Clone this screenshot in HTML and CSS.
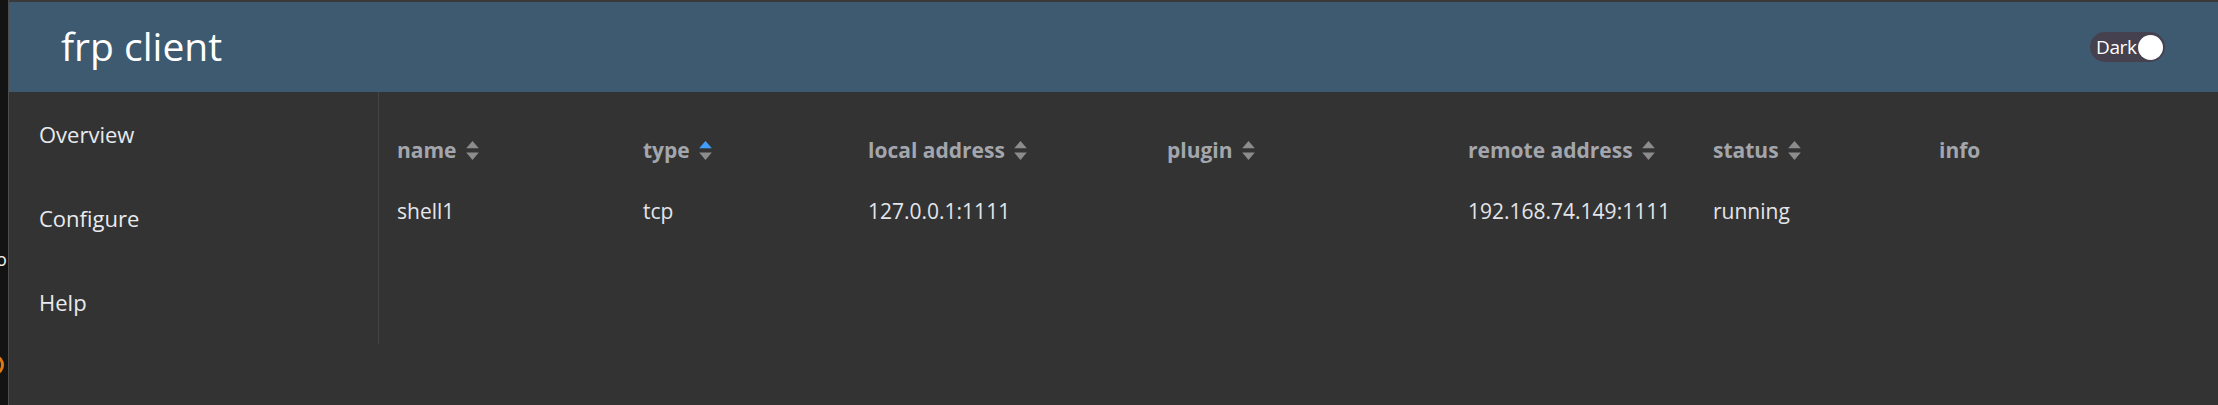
FILE: index.html
```html
<!DOCTYPE html>
<html lang="en">
<head>
<meta charset="utf-8">
<title>frp client</title>
<link rel="stylesheet" href="styles.css">
</head>
<body>
<div class="screen">
  <div class="outside">
    <span class="outside-glyph">o</span>
    <span class="outside-ring"></span>
  </div>
  <div class="app">
    <header class="topbar">
      <h1 class="brand">frp client</h1>
      <div class="switch">
        <span class="switch-text">Dark</span>
        <span class="switch-knob"></span>
      </div>
    </header>
    <div class="body">
      <aside class="aside">
        <ul class="menu">
          <li class="menu-item">Overview</li>
          <li class="menu-item">Configure</li>
          <li class="menu-item">Help</li>
        </ul>
      </aside>
      <main class="main">
        <table class="table">
          <colgroup>
            <col class="c-name"><col class="c-type"><col class="c-local"><col class="c-plugin"><col class="c-remote"><col class="c-status"><col>
          </colgroup>
          <thead>
            <tr>
              <th><span class="th">name<svg class="caret" viewBox="0 0 12 19"><path d="M0 7 L6 0 L12 7 Z" fill="#8c8c8c"/><path d="M0 11 L12 11 L6 18 Z" fill="#8c8c8c"/></svg></span></th>
              <th><span class="th">type<svg class="caret" viewBox="0 0 12 19"><path d="M0 7 L6 0 L12 7 Z" fill="#409eff"/><path d="M0 11 L12 11 L6 18 Z" fill="#8c8c8c"/></svg></span></th>
              <th><span class="th">local address<svg class="caret" viewBox="0 0 12 19"><path d="M0 7 L6 0 L12 7 Z" fill="#8c8c8c"/><path d="M0 11 L12 11 L6 18 Z" fill="#8c8c8c"/></svg></span></th>
              <th><span class="th">plugin<svg class="caret" viewBox="0 0 12 19"><path d="M0 7 L6 0 L12 7 Z" fill="#8c8c8c"/><path d="M0 11 L12 11 L6 18 Z" fill="#8c8c8c"/></svg></span></th>
              <th><span class="th">remote address<svg class="caret" viewBox="0 0 12 19"><path d="M0 7 L6 0 L12 7 Z" fill="#8c8c8c"/><path d="M0 11 L12 11 L6 18 Z" fill="#8c8c8c"/></svg></span></th>
              <th><span class="th">status<svg class="caret" viewBox="0 0 12 19"><path d="M0 7 L6 0 L12 7 Z" fill="#8c8c8c"/><path d="M0 11 L12 11 L6 18 Z" fill="#8c8c8c"/></svg></span></th>
              <th><span class="th">info</span></th>
            </tr>
          </thead>
          <tbody>
            <tr>
              <td>shell1</td>
              <td>tcp</td>
              <td>127.0.0.1:1111</td>
              <td></td>
              <td>192.168.74.149:1111</td>
              <td>running</td>
              <td></td>
            </tr>
          </tbody>
        </table>
      </main>
    </div>
  </div>
</div>
</body>
</html>
```
FILE: styles.css
```css
* { box-sizing: border-box; }
html, body { margin: 0; padding: 0; }
body {
  background: #333333;
  font-family: "Open Sans", "Noto Sans", sans-serif;
  overflow: hidden;
}
.screen {
  display: flex;
  width: 2218px;
  height: 405px;
}
.outside {
  width: 9px;
  flex: none;
  background: #131313;
  border-right: 1px solid #4e4e4e;
  display: flex;
  flex-direction: column;
  overflow: hidden;
}
.outside-glyph {
  color: #f0f0f0;
  font-size: 18px;
  line-height: 18px;
  margin-top: 250px;
  margin-left: -4px;
}
.outside-ring {
  width: 14px;
  height: 18px;
  margin-top: 88px;
  margin-left: -10px;
  border: 3px solid #e07a10;
  border-radius: 50%;
}
.app {
  flex: 1;
  display: flex;
  flex-direction: column;
  border-top: 2px solid #3a3a3a;
  background: #333333;
}
.topbar {
  height: 90px;
  flex: none;
  background: #3d5a71;
  display: flex;
  align-items: center;
  justify-content: space-between;
  padding: 0 53px 0 52px;
}
.brand {
  margin: 0;
  color: #ffffff;
  font-weight: 400;
  font-size: 39px;
  line-height: 1;
  padding-bottom: 4px;
}
.switch {
  display: flex;
  align-items: center;
  height: 30px;
  width: 75px;
  border-radius: 15px;
  background: #46414e;
  padding: 0 2px 0 6px;
  justify-content: space-between;
}
.switch-text {
  color: #ffffff;
  font-size: 19px;
  line-height: 1;
  letter-spacing: -0.4px;
}
.switch-knob {
  width: 25px;
  height: 25px;
  border-radius: 50%;
  background: #ffffff;
}
.body {
  flex: 1;
  display: flex;
}
.aside {
  width: 370px;
  flex: none;
}
.menu {
  list-style: none;
  margin: 0;
  padding: 0;
  border-right: 1px solid #444444;
}
.menu-item {
  height: 84px;
  display: flex;
  align-items: center;
  padding-left: 30px;
  color: #e8eaf0;
  font-size: 22px;
}
.main {
  flex: 1;
  padding: 30px 0 0 8px;
}
.table {
  border-collapse: collapse;
  table-layout: fixed;
  width: 100%;
}
.c-name { width: 246px; }
.c-type { width: 225px; }
.c-local { width: 299px; }
.c-plugin { width: 301px; }
.c-remote { width: 245px; }
.c-status { width: 226px; }
.table th, .table td {
  padding: 0 10px;
  text-align: left;
  white-space: nowrap;
}
.table th {
  height: 56px;
  color: #a3a6ad;
  font-weight: 700;
  font-size: 21px;
}
.table td {
  height: 66px;
  color: #e3e5ea;
  font-size: 21px;
  font-weight: 400;
}
.th {
  display: inline-flex;
  align-items: center;
}
.caret {
  width: 13px;
  height: 20px;
  margin-left: 9px;
  margin-top: 1px;
}
```
